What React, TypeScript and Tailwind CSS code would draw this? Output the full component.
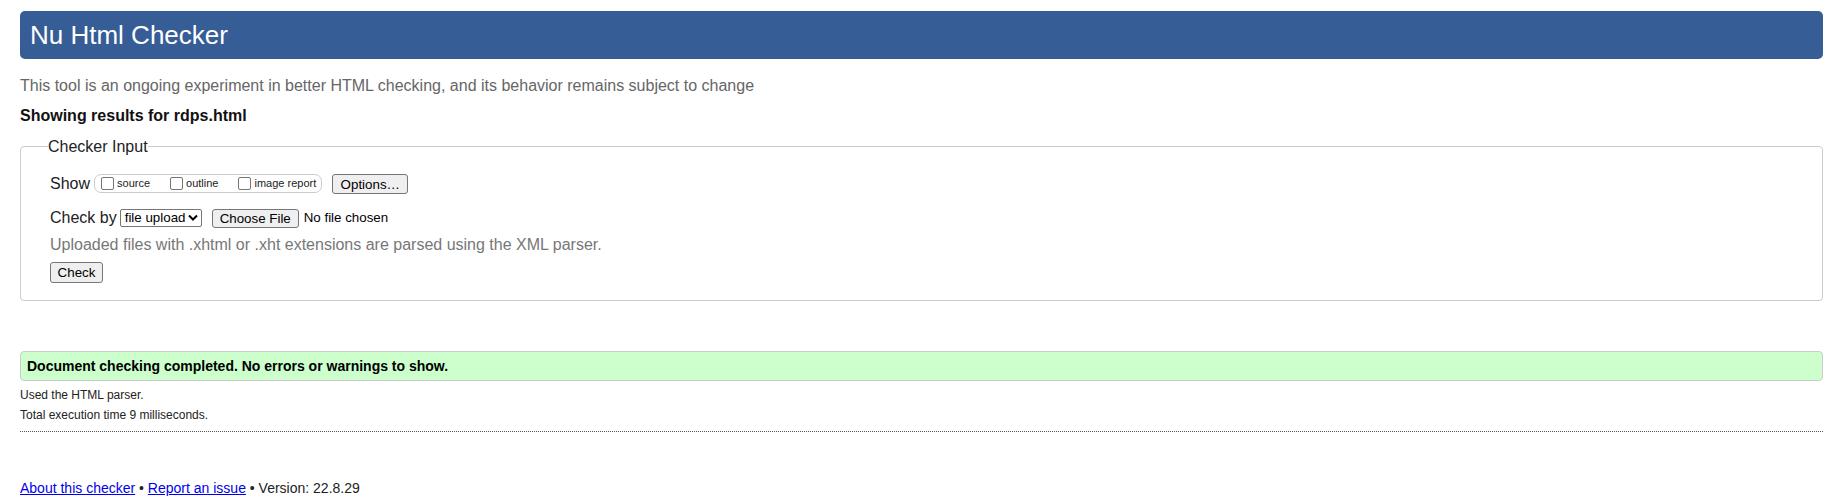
import React from "react";

function Checkbox() {
  return <span className="inline-block w-[13px] h-[13px] border border-[#767676] rounded-[2px] bg-white shrink-0" />;
}

function Btn({ children, w, h }: { children: React.ReactNode; w: string; h: string }) {
  return (
    <span
      className={`inline-flex items-center justify-center ${w} ${h} bg-[#efefef] border border-[#767676] rounded-[3px] text-[13.33px] leading-[15px] text-black`}
    >
      {children}
    </span>
  );
}

export default function App() {
  return (
    <div className="font-['Liberation_Sans',Arial,sans-serif] text-[#222] bg-white w-[1834px] h-[498px] pl-[20px] pr-[11px] pt-[11px] overflow-hidden">
      <div className="h-[48px] bg-[#365d95] rounded-[5px] flex items-center pl-[10px] pb-[1px]">
        <h1 className="text-white text-[26px] leading-[30px] font-normal">Nu Html Checker</h1>
      </div>

      <p className="mt-[17px] text-[16px] leading-[20px] text-[#666]">
        This tool is an ongoing experiment in better HTML checking, and its behavior remains subject to change
      </p>
      <p className="mt-[10px] text-[16px] leading-[20px] font-bold text-[#111]">Showing results for rdps.html</p>

      <fieldset className="mt-[11px] border border-[#ccc] rounded-[4px] pl-[27px] pr-[20px] pt-[17px] pb-[17px]">
        <legend className="text-[16px] leading-[19px] text-[#222]">Checker Input</legend>
        <div className="pl-[2px]">
          {/* Row 1 */}
          <div className="h-[21px] flex items-center">
            <span className="text-[16px] leading-[19px] mr-[4px]">Show</span>
            <span className="h-[19px] flex items-center border border-[#ccc] rounded-[7px] pl-[6px] pr-[5px]">
              <span className="flex items-center">
                <Checkbox />
                <span className="ml-[3px] text-[11px] leading-[13px]">source</span>
              </span>
              <span className="flex items-center ml-[20px]">
                <Checkbox />
                <span className="ml-[3px] text-[11px] leading-[13px]">outline</span>
              </span>
              <span className="flex items-center ml-[20px]">
                <Checkbox />
                <span className="ml-[3px] text-[11px] leading-[13px]">image report</span>
              </span>
            </span>
            <span className="ml-[10px]">
              <Btn w="w-[76px]" h="h-[20px]">Options…</Btn>
            </span>
          </div>

          {/* Row 2 */}
          <div className="mt-[14px] h-[19px] flex items-center">
            <span className="text-[16px] leading-[19px] mr-[3px]">Check by</span>
            <span className="w-[82px] h-[18px] flex items-center justify-between border border-[#767676] rounded-[2px] bg-white pl-[4px] pr-[3px] text-[13.33px] leading-[15px] text-black">
              <span>file upload</span>
              <svg width="10" height="7" viewBox="0 0 10 7" className="block">
                <polyline points="1,1.5 5,5.5 9,1.5" fill="none" stroke="#000" strokeWidth="2" />
              </svg>
            </span>
            <span className="ml-[10px]">
              <Btn w="w-[87px]" h="h-[19px]">Choose File</Btn>
            </span>
            <span className="ml-[5px] text-[13.33px] leading-[15px] text-black">No file chosen</span>
          </div>

          {/* Row 3 */}
          <p className="mt-[8px] text-[16px] leading-[20px] text-[#777]">
            Uploaded files with .xhtml or .xht extensions are parsed using the XML parser.
          </p>

          {/* Row 4 */}
          <div className="mt-[7px] h-[21px] flex items-center">
            <Btn w="w-[53px]" h="h-[21px]">Check</Btn>
          </div>
        </div>
      </fieldset>

      <div className="mt-[50px] h-[30px] flex items-center bg-[#ccffcc] border border-[#ccc] rounded-[4px] pl-[6px]">
        <p className="text-[14px] leading-[16px] font-bold text-black">
          Document checking completed. No errors or warnings to show.
        </p>
      </div>

      <div className="mt-[4px] text-[12px] leading-[20px] text-[#222]">
        <p>Used the HTML parser.</p>
        <p>Total execution time 9 milliseconds.</p>
      </div>

      <div className="mt-[6px] border-t border-dotted border-[#555]" />

      <p className="mt-[46px] text-[14px] leading-[20px] text-[#222]">
        <a href="#" className="text-[#0000ee] underline">About this checker</a>
        {" • "}
        <a href="#" className="text-[#0000ee] underline">Report an issue</a>
        {" • Version: 22.8.29"}
      </p>
    </div>
  );
}
